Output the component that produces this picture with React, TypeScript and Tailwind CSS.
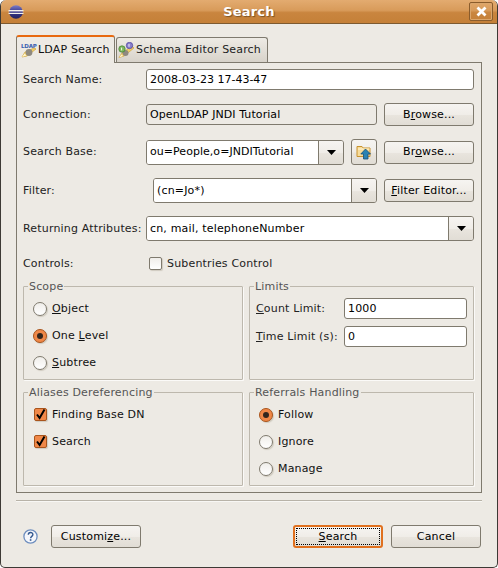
import type { ReactNode } from "react";

const BUTTON_BG = "bg-[linear-gradient(#f6f4f1_0%,#f0ede8_50%,#e8e4dd_55%,#e1ddd5_100%)]";

function EclipseLogo() {
  return (
    <svg width="16" height="14" viewBox="0 0 16 14">
      <defs>
        <linearGradient id="ecl" x1="0" y1="0" x2="0" y2="1">
          <stop offset="0" stopColor="#7f7fc8" />
          <stop offset="0.5" stopColor="#35358c" />
          <stop offset="1" stopColor="#23235f" />
        </linearGradient>
      </defs>
      <circle cx="8" cy="7" r="6.8" fill="url(#ecl)" />
      <rect x="0.5" y="5" width="15" height="1.4" fill="#f2f0ea" />
      <rect x="0.5" y="7.8" width="15" height="1.2" fill="#f2f0ea" />
    </svg>
  );
}

function CloseButton() {
  return (
    <div className="flex h-[19px] w-[24px] items-center justify-center rounded-[2px] border border-[#8a5c2c] shadow-[inset_0_0_0_1px_#dba66c]">
      <svg width="11" height="11" viewBox="0 0 11 11">
        <path d="M1.5 1.5 9.5 9.5M9.5 1.5 1.5 9.5" stroke="#ffffff" strokeWidth="2.8" />
      </svg>
    </div>
  );
}

function LdapIcon() {
  return (
    <svg width="17" height="16" viewBox="0 0 17 16" className="shrink-0">
      <text x="0" y="5.5" fontSize="5.5" fontWeight="700" fill="#3a5fb0" fontFamily="'DejaVu Sans', sans-serif" textLength="16">
        LDAP
      </text>
      <path d="M1 15 4 10 13 6 15 7 6 14Z" fill="#f2cf6a" stroke="#c99a2c" strokeWidth="0.6" />
      <circle cx="8" cy="10.5" r="3.4" fill="#8f8a80" />
      <path d="M1 15 3.5 11.5 5.5 13.5Z" fill="#fff6cf" />
    </svg>
  );
}

function SchemaIcon() {
  return (
    <svg width="18" height="16" viewBox="0 0 18 16" className="shrink-0">
      <path d="M1 15.5 4 11 14 4 16 6 6 14Z" fill="#f2cf6a" stroke="#c99a2c" strokeWidth="0.6" />
      <circle cx="7.5" cy="11" r="3" fill="#8f8a80" />
      <circle cx="4" cy="7" r="3.2" fill="#7fb85e" stroke="#3f7f32" strokeWidth="0.7" />
      <circle cx="11.5" cy="3.5" r="3.2" fill="#8a80cc" stroke="#4a3f9c" strokeWidth="0.7" />
      <path d="M3.6 5.6v2.8M11 2v2.8" stroke="#ffffff" strokeWidth="0.9" />
      <path d="M1 15.5 3.5 12.5 5 14Z" fill="#fff6cf" />
    </svg>
  );
}

function FolderUpIcon() {
  return (
    <svg width="16" height="16" viewBox="0 0 16 16">
      <path d="M1 2.5h5l1.2 1.5H14v8.5H1Z" fill="#f7dc9a" stroke="#c8922e" strokeWidth="1" />
      <path d="M2 5h11.5" stroke="#fff3cf" strokeWidth="1" />
      <path d="M9.5 5 14.5 10H12V15H7.5V10H4.8Z" fill="#2a83b2" stroke="#174f78" strokeWidth="0.8" />
    </svg>
  );
}

function HelpIcon() {
  return (
    <svg width="15" height="15" viewBox="0 0 15 15">
      <circle cx="7.5" cy="7.5" r="6.6" fill="#f4f6fb" stroke="#6f8fbf" strokeWidth="1.3" />
      <path d="M5.3 5.8c0-3 4.6-3 4.6-.2 0 1.7-2.3 1.8-2.3 3.6" fill="none" stroke="#33588f" strokeWidth="1.4" />
      <rect x="6.8" y="10.2" width="1.6" height="1.6" fill="#33588f" />
    </svg>
  );
}

function Arrow() {
  return (
    <svg width="9" height="5" viewBox="0 0 9 5">
      <path d="M0 0h9L4.5 5Z" fill="#000000" />
    </svg>
  );
}

function Button({ children, className = "w-[90px]" }: { children: ReactNode; className?: string }) {
  return (
    <button
      type="button"
      className={`flex h-[23px] shrink-0 items-center justify-center rounded-[3px] border border-[#7f7a6e] text-black ${BUTTON_BG} ${className}`}
    >
      {children}
    </button>
  );
}

function TextBox({ value, readOnly = false, className = "" }: { value: string; readOnly?: boolean; className?: string }) {
  return (
    <div
      className={`flex h-[21px] items-center rounded-[3px] border border-[#7f7a6e] pl-[3px] text-black ${
        readOnly ? "bg-[#edeae4]" : "bg-white"
      } ${className}`}
    >
      {value}
    </div>
  );
}

function Combo({ value, className = "" }: { value: string; className?: string }) {
  return (
    <div className={`flex h-[25px] overflow-hidden rounded-[3px] border border-[#7f7a6e] ${className}`}>
      <div className="flex flex-1 items-center bg-white pl-[3px] text-black">{value}</div>
      <div className={`flex w-[25px] items-center justify-center border-l border-[#7f7a6e] ${BUTTON_BG}`}>
        <Arrow />
      </div>
    </div>
  );
}

function Label({ children, className = "w-[123px]" }: { children: ReactNode; className?: string }) {
  return <div className={`shrink-0 text-[#222222] ${className}`}>{children}</div>;
}

function Group({ title, children, className = "" }: { title: string; children: ReactNode; className?: string }) {
  return (
    <div className={`relative h-[94px] rounded-[1px] border border-[#bdb8ad] pt-[8px] shadow-[1px_1px_0_#fbfaf8] ${className}`}>
      <span className="absolute -top-[7px] left-[4px] bg-[#edeae4] px-px text-[#555555]">{title}</span>
      {children}
    </div>
  );
}

function Radio({ checked = false, children, className = "pl-[9px]" }: { checked?: boolean; children: ReactNode; className?: string }) {
  return (
    <div className={`flex h-[27px] items-center gap-[5px] text-[#111111] ${className}`}>
      {checked ? (
        <span className="flex h-[14px] w-[14px] items-center justify-center rounded-full border border-[#a9551d] bg-[#f08848] shadow-[1px_1px_1px_#cfcabf]">
          <span className="h-[6px] w-[6px] rounded-full bg-[#33261d]" />
        </span>
      ) : (
        <span className="h-[14px] w-[14px] rounded-full border border-[#7f7a6e] bg-[linear-gradient(#f0eeea,#ffffff)] shadow-[1px_1px_1px_#cfcabf]" />
      )}
      <span>{children}</span>
    </div>
  );
}

function Check({ children }: { children: ReactNode }) {
  return (
    <div className="flex h-[27px] items-center gap-[5px] pl-[10px] text-[#111111]">
      <span className="flex h-[13px] w-[13px] items-center justify-center rounded-[2px] border border-[#a9551d] bg-[#f08848] shadow-[1px_1px_1px_#cfcabf]">
        <svg width="11" height="11" viewBox="0 0 11 11">
          <path d="M2 5.5 4.6 9 9.5 0.5" fill="none" stroke="#000000" strokeWidth="2" />
        </svg>
      </span>
      <span>{children}</span>
    </div>
  );
}

export default function App() {
  return (
    <div
      className="flex h-[568px] w-[498px] flex-col overflow-hidden rounded-t-[6px] rounded-b-[5px] border border-t-0 border-[#3d3a35] bg-[#edeae4] text-[11px] leading-[14px] tracking-[0.17px]"
      style={{ fontFamily: "'DejaVu Sans', sans-serif" }}
    >
      <div className="relative flex h-[24px] shrink-0 items-center justify-between border-b border-[#7d5a30] bg-[linear-gradient(#e3ab70_0%,#d89b5a_45%,#c9853f_55%,#c58038_100%)] pl-[7px] pr-[4px]">
        <EclipseLogo />
        <span className="absolute left-0 right-0 text-center text-[13px] font-bold text-white [text-shadow:1px_1px_1px_#7a5226]">
          Search
        </span>
        <CloseButton />
      </div>

      <div className="flex flex-1 flex-col px-[15px]">
        <div className="mt-[11px] flex h-[27px] items-end">
          <div className="relative z-10 -mb-px flex h-[28px] w-[99px] items-center rounded-t-[3px] border-x border-t-2 border-x-[#7f7a6e] border-t-[#e8690f] bg-[#edeae4] pl-[4px] text-[#111111]">
            <LdapIcon />
            LDAP Search
          </div>
          <div className="ml-px flex h-[25px] w-[152px] items-center rounded-t-[3px] border-x border-t border-[#7f7a6e] bg-[linear-gradient(#eeebe5,#d8d3ca)] pl-[1px] text-[#222222]">
            <SchemaIcon />
            Schema Editor Search
          </div>
        </div>

        <div className="flex h-[431px] flex-col border border-[#7f7a6e] pl-[6px] pr-[7px]">
          <div className="mt-[6px] flex h-[21px] items-center">
            <Label>Search Name:</Label>
            <TextBox value="2008-03-23 17-43-47" className="flex-1 tracking-normal" />
          </div>

          <div className="mt-[13px] flex h-[23px] items-center">
            <Label>Connection:</Label>
            <TextBox value="OpenLDAP JNDI Tutorial" readOnly className="flex-1 tracking-[0.08px]" />
            <Button className="ml-[7px] w-[90px]">
              <span>B<u>r</u>owse...</span>
            </Button>
          </div>

          <div className="mt-[13px] flex h-[26px] items-center">
            <Label>Search Base:</Label>
            <Combo value="ou=People,o=JNDITutorial" className="flex-1 tracking-[0.04px]" />
            <div className={`ml-[7px] flex h-[26px] w-[26px] items-center justify-center rounded-[3px] border border-[#7f7a6e] ${BUTTON_BG}`}>
              <FolderUpIcon />
            </div>
            <Button className="ml-[7px] w-[90px]">
              <span>Br<u>o</u>wse...</span>
            </Button>
          </div>

          <div className="mt-[13px] flex h-[25px] items-center">
            <Label className="w-[130px]">Filter:</Label>
            <Combo value="(cn=Jo*)" className="flex-1" />
            <Button className="ml-[7px] w-[90px]">
              <span><u>F</u>ilter Editor...</span>
            </Button>
          </div>

          <div className="mt-[13px] flex h-[25px] items-center">
            <Label>Returning Attributes:</Label>
            <Combo value="cn, mail, telephoneNumber" className="flex-1" />
          </div>

          <div className="mt-[13px] flex h-[19px] items-center">
            <Label className="w-[126px]">Controls:</Label>
            <span className="h-[13px] w-[13px] rounded-[2px] border border-[#7f7a6e] bg-[linear-gradient(#f0eeea,#ffffff)] shadow-[1px_1px_1px_#cfcabf]" />
            <span className="ml-[5px] text-[#222222]">Subentries Control</span>
          </div>

          <div className="mt-[13px] grid grid-cols-[220px_225px] gap-x-[6px] gap-y-[12px]">
            <Group title="Scope">
              <Radio><u>O</u>bject</Radio>
              <Radio checked>One <u>L</u>evel</Radio>
              <Radio><u>S</u>ubtree</Radio>
            </Group>
            <Group title="Limits" className="px-[6px]">
              <div className="mt-[3px] flex items-center">
                <span className="w-[88px] text-[#222222]"><u>C</u>ount Limit:</span>
                <TextBox value="1000" className="flex-1" />
              </div>
              <div className="mt-[7px] flex items-center">
                <span className="w-[88px] text-[#222222]"><u>T</u>ime Limit (s):</span>
                <TextBox value="0" className="flex-1" />
              </div>
            </Group>
            <Group title="Aliases Dereferencing">
              <Check>Finding Base DN</Check>
              <Check>Search</Check>
            </Group>
            <Group title="Referrals Handling">
              <Radio checked>Follow</Radio>
              <Radio>Ignore</Radio>
              <Radio>Manage</Radio>
            </Group>
          </div>
        </div>

        <div className="mt-[7px] h-[2px] border-t border-[#b8b3a8] bg-[#f8f7f4]" />

        <div className="mt-[23px] flex items-center">
          <div className="ml-[7px] flex w-[28px] items-center">
            <HelpIcon />
          </div>
          <Button>Customi<u>z</u>e...</Button>
          <div className="flex-1" />
          <button
            type="button"
            className={`flex h-[23px] w-[90px] items-center justify-center rounded-[3px] border-2 border-[#e0701e] p-px text-black ${BUTTON_BG}`}
          >
            <span className="flex h-full w-full items-center justify-center border border-dotted border-black">
              <span><u>S</u>earch</span>
            </span>
          </button>
          <Button className="ml-[8px] mr-px w-[90px]">Cancel</Button>
        </div>
      </div>
    </div>
  );
}
